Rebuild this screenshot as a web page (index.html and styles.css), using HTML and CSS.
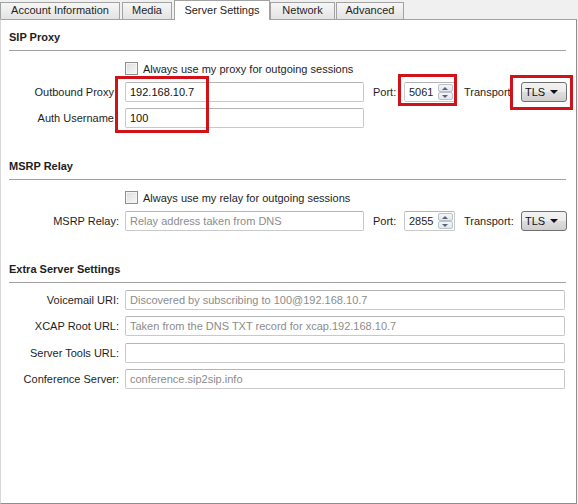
FILE: index.html
```html
<!DOCTYPE html>
<html>
<head>
<meta charset="utf-8">
<link rel="stylesheet" href="styles.css">
</head>
<body>
<div class="window">
  <div class="tabs">
    <div class="tab tab-account">Account Information</div>
    <div class="tab tab-media">Media</div>
    <div class="tab tab-active">Server Settings</div>
    <div class="tab tab-network">Network</div>
    <div class="tab tab-advanced">Advanced</div>
  </div>
  <div class="panel">
    <div class="group">
      <div class="heading">SIP Proxy</div>
      <div class="sep"></div>
      <div class="check-row">
        <span class="checkbox"></span><span class="check-label">Always use my proxy for outgoing sessions</span>
      </div>
      <div class="row first">
        <div class="label label-nocolon">Outbound Proxy</div>
        <div class="input input-mid">192.168.10.7</div>
        <div class="port-label">Port:</div>
        <div class="spin"><span class="spin-val">5061</span><span class="spin-btns"><span class="spin-up"></span><span class="spin-down"></span></span></div>
        <div class="trans-label">Transport</div>
        <div class="combo"><span>TLS</span><span class="combo-arrow"></span></div>
      </div>
      <div class="row">
        <div class="label label-nocolon">Auth Username</div>
        <div class="input input-mid">100</div>
      </div>
    </div>

    <div class="group group-next">
      <div class="heading">MSRP Relay</div>
      <div class="sep"></div>
      <div class="check-row">
        <span class="checkbox"></span><span class="check-label">Always use my relay for outgoing sessions</span>
      </div>
      <div class="row first">
        <div class="label">MSRP Relay:</div>
        <div class="input input-mid placeholder">Relay address taken from DNS</div>
        <div class="port-label">Port:</div>
        <div class="spin"><span class="spin-val">2855</span><span class="spin-btns"><span class="spin-up"></span><span class="spin-down"></span></span></div>
        <div class="trans-label">Transport:</div>
        <div class="combo"><span>TLS</span><span class="combo-arrow"></span></div>
      </div>
    </div>

    <div class="group group-next">
      <div class="heading">Extra Server Settings</div>
      <div class="sep"></div>
      <div class="row first-extra">
        <div class="label">Voicemail URI:</div>
        <div class="input input-wide placeholder">Discovered by subscribing to 100@192.168.10.7</div>
      </div>
      <div class="row">
        <div class="label">XCAP Root URL:</div>
        <div class="input input-wide placeholder">Taken from the DNS TXT record for xcap.192.168.10.7</div>
      </div>
      <div class="row row-7">
        <div class="label">Server Tools URL:</div>
        <div class="input input-wide"></div>
      </div>
      <div class="row">
        <div class="label">Conference Server:</div>
        <div class="input input-wide placeholder">conference.sip2sip.info</div>
      </div>
    </div>
  </div>

  <div class="mark mark-proxy"></div>
  <div class="mark mark-port"></div>
  <div class="mark mark-transport"></div>
</div>
</body>
</html>
```
FILE: styles.css
```css
html, body {
  margin: 0;
  padding: 0;
  background: #f0f0f0;
}
body {
  font-family: "Liberation Sans", Arial, sans-serif;
  font-size: 11px;
  color: #1e1e1e;
}
.window {
  position: relative;
  width: 578px;
  height: 504px;
}
.tabs {
  display: flex;
  height: 19px;
  align-items: flex-end;
  position: relative;
  z-index: 2;
}
.tab {
  box-sizing: border-box;
  height: 17px;
  line-height: 15px;
  border: 1px solid #a2a2a2;
  border-bottom: none;
  background: linear-gradient(#f6f6f6, #e3e3e3);
  text-align: center;
  margin-right: 2px;
  color: #1e1e1e;
}
.tab-account { width: 120px; }
.tab-media { width: 50px; }
.tab-active {
  width: 96px;
  height: 20px;
  margin-bottom: -1px;
  background: #ffffff;
  line-height: 18px;
  border-color: #a2a2a2;
  margin-right: 0;
  padding-bottom: 2px;
}
.tab-network { width: 65px; margin-right: 1px; }
.tab-advanced { width: 68px; }

.panel {
  box-sizing: border-box;
  width: 577px;
  height: 485px;
  background: #ffffff;
  border: 1px solid #8e8e8e;
  border-top-color: #a2a2a2;
  border-left-color: #d8d8d8;
  padding-top: 10px;
}
.heading {
  font-weight: bold;
  height: 14px;
  line-height: 14px;
  margin-left: 8px;
  color: #1e1e1e;
}
.sep {
  height: 1px;
  background: #a0a0a0;
  margin: 6px 10px 0 8px;
}
.group-next .heading {
  margin-top: 31px;
}
.check-row {
  display: flex;
  align-items: center;
  margin-top: 11px;
  margin-left: 124px;
  height: 13px;
}
.checkbox {
  box-sizing: border-box;
  width: 13px;
  height: 13px;
  border: 1px solid #8e8f8f;
  background: linear-gradient(135deg, #dcdcdc, #f8f8f8);
  box-shadow: inset 0 0 0 1px #f4f4f4;
}
.check-label {
  margin-left: 5px;
}
.row {
  display: flex;
  align-items: center;
  height: 20px;
  margin-top: 6px;
}
.row.first { margin-top: 7px; }
.row.first-extra { margin-top: 7px; }
.row.row-7 { margin-top: 7px; }
.label {
  width: 118px;
  text-align: right;
  margin-right: 6px;
  white-space: nowrap;
}
.label-nocolon {
  width: 113px;
  margin-right: 11px;
}
.input {
  box-sizing: border-box;
  height: 20px;
  line-height: 18px;
  border: 1px solid #c9c9c9;
  border-top-color: #b5b5b5;
  border-radius: 2px;
  background: #ffffff;
  padding-left: 4px;
  white-space: nowrap;
  overflow: hidden;
  color: #111;
}
.input-mid { width: 239px; }
.input-wide { width: 440px; }
.placeholder { color: #8c8c8c; }
.port-label {
  width: 31px;
  margin-left: 9px;
}
.spin {
  box-sizing: border-box;
  width: 51px;
  height: 20px;
  border: 1px solid #c9c9c9;
  border-top-color: #b5b5b5;
  border-radius: 2px;
  display: flex;
  align-items: center;
  justify-content: space-between;
  padding: 1px 1px 1px 4px;
}
.spin-val { line-height: 16px; }
.spin-btns {
  display: flex;
  flex-direction: column;
  width: 15px;
  height: 16px;
}
.spin-up, .spin-down {
  flex: 1;
  position: relative;
  border: 1px solid #b9c2cc;
  background: linear-gradient(#f4f6f8, #e2e6ea);
  border-radius: 2px;
}
.spin-up::after, .spin-down::after {
  content: "";
  position: absolute;
  left: 3px;
  top: 2px;
  border-left: 3px solid transparent;
  border-right: 3px solid transparent;
}
.spin-up::after { border-bottom: 3px solid #5a6472; }
.spin-down::after { border-top: 3px solid #5a6472; top: 2px; }
.trans-label {
  width: 57px;
  margin-left: 9px;
}
.combo {
  box-sizing: border-box;
  width: 46px;
  height: 20px;
  border: 1px solid #707070;
  border-radius: 3px;
  background: linear-gradient(#f3f3f3 0%, #ebebeb 50%, #dddddd 51%, #cfcfcf 100%);
  display: flex;
  align-items: center;
  justify-content: space-between;
  padding: 0 8px 0 3px;
  color: #111;
}
.combo-arrow {
  width: 0;
  height: 0;
  border-left: 4px solid transparent;
  border-right: 4px solid transparent;
  border-top: 4px solid #111;
}

.mark {
  position: absolute;
  box-sizing: border-box;
  border: 3px solid #d0121b;
  z-index: 3;
}
.mark-proxy { left: 115px; top: 76px; width: 94px; height: 57px; }
.mark-port { left: 398px; top: 74px; width: 59px; height: 32px; }
.mark-transport { left: 510px; top: 75px; width: 63px; height: 35px; }
```
